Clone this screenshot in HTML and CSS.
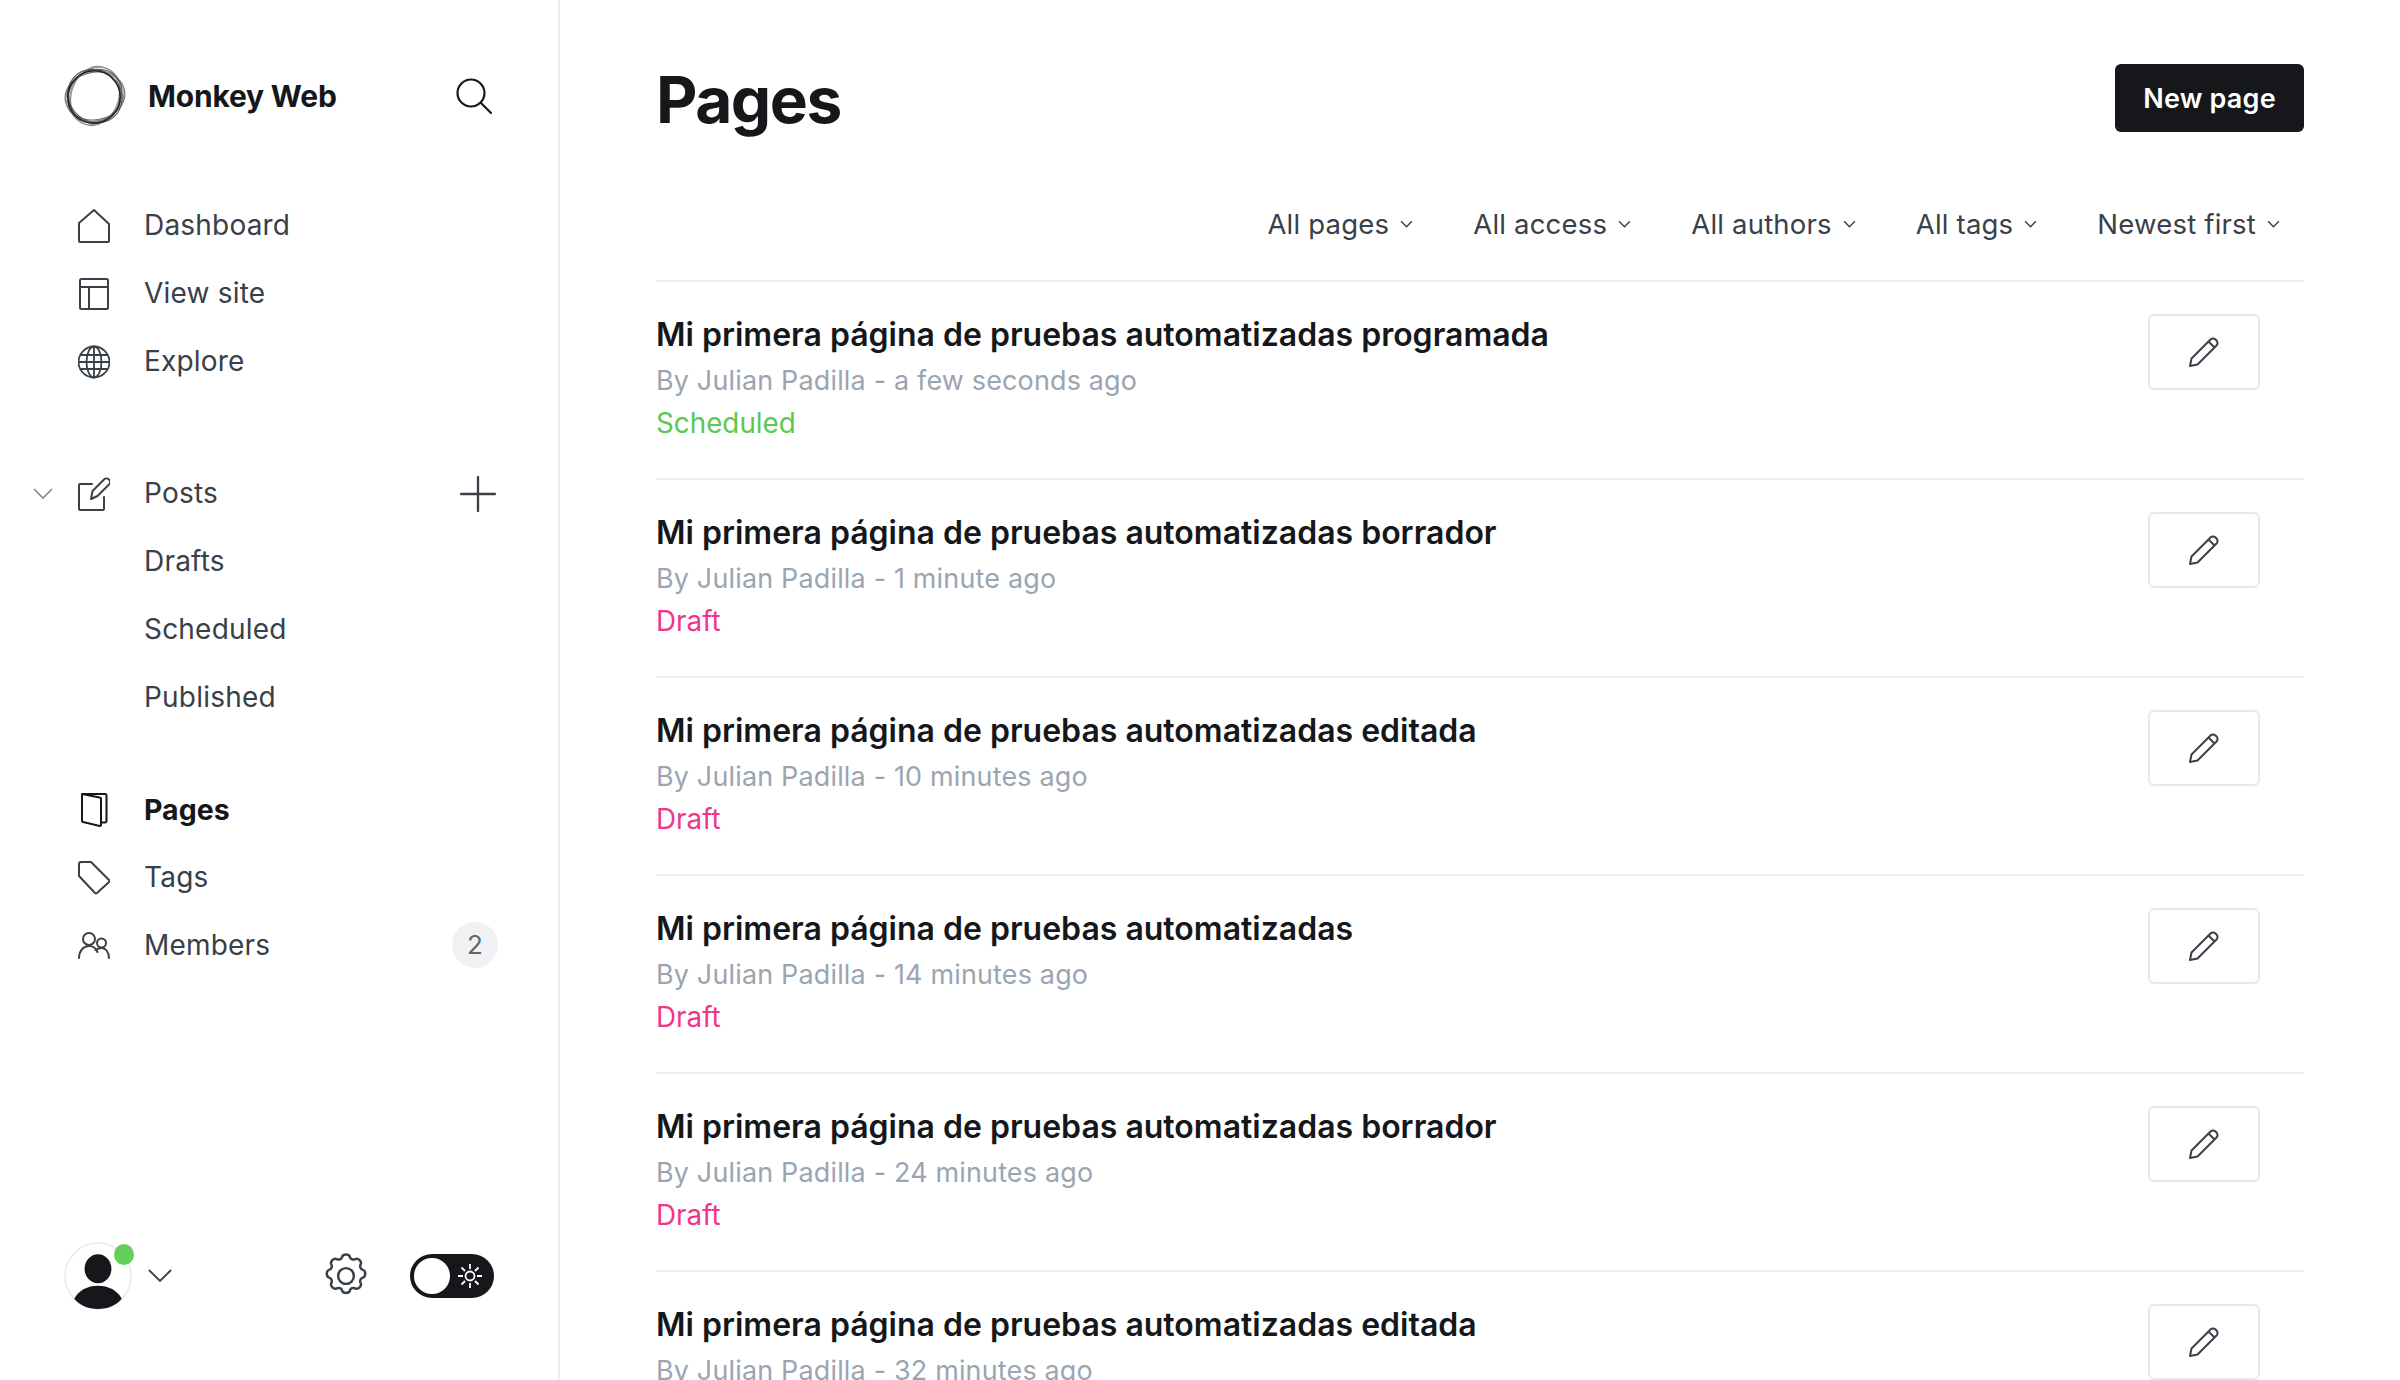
FILE: index.html
```html
<!DOCTYPE html>
<html>
<head>
  <meta charset="utf-8">
  <title>Pages - Monkey Web</title>
  <link rel="stylesheet" href="styles.css">
</head>
<body>
  <div id="app">
    <aside class="sidebar">
      <div class="brand">
        <svg class="logo" viewBox="0 0 64 64" fill="none">
          <ellipse cx="32" cy="32" rx="31" ry="24.500" transform="rotate(-72 32 32)" stroke="#888" stroke-width="1.200"/>
          <ellipse cx="32" cy="32" rx="31" ry="25" transform="rotate(-62 32 32)" stroke="#999" stroke-width="1.200"/>
          <ellipse cx="32" cy="32" rx="31" ry="24.500" transform="rotate(-10 32 32)" stroke="#777" stroke-width="1.200"/>
          <ellipse cx="32" cy="32" rx="30.500" ry="25.500" transform="rotate(-20 32 32)" stroke="#888" stroke-width="1.200"/>
          <ellipse cx="32" cy="32" rx="29.500" ry="26" transform="rotate(-42 32 32)" stroke="#555" stroke-width="1.200"/>
          <ellipse cx="32" cy="32" rx="29" ry="26.500" transform="rotate(40 32 32)" stroke="#555" stroke-width="1.200"/>
          <circle cx="31" cy="33" r="27" stroke="#222" stroke-width="1.600"/>
        </svg>
        <span class="brand-name">Monkey Web</span>
        <svg class="search" viewBox="0 0 36 36" fill="none" stroke="#15171a" stroke-width="2.200" stroke-linecap="round">
          <circle cx="15" cy="15" r="13.500"/>
          <path d="M25 25l10 10"/>
        </svg>
      </div>

      <nav class="nav nav-top">
        <a class="nav-item">
          <svg class="icon" viewBox="0 0 32 34" fill="none" stroke="#394047" stroke-width="2" stroke-linejoin="round"><path d="M1 14L16 1l15 14v17a1 1 0 0 1-1 1H2a1 1 0 0 1-1-1z"/></svg>
          Dashboard
        </a>
        <a class="nav-item">
          <svg class="icon" viewBox="0 0 32 32" fill="none" stroke="#394047" stroke-width="2" stroke-linejoin="round"><rect x="2" y="1" width="28" height="30" rx="1.500"/><path d="M2 9h28M11 9v22"/></svg>
          View site
        </a>
        <a class="nav-item">
          <svg class="icon" viewBox="0 0 32 34" fill="none" stroke="#394047" stroke-width="1.800"><circle cx="16" cy="17" r="15.500"/><ellipse cx="16" cy="17" rx="7.500" ry="15.500"/><path d="M16 1.500v31M2.500 10h27M1 17h30M2.500 24h27"/></svg>
          Explore
        </a>
      </nav>

      <nav class="nav nav-posts">
        <a class="nav-item">
          <svg class="caret" viewBox="0 0 20 12" fill="none" stroke="#7c8b9a" stroke-width="1.600"><path d="M1 1l9 9 9-9"/></svg>
          <svg class="icon" viewBox="0 0 32 34" fill="none" stroke="#394047" stroke-width="2" stroke-linejoin="round" stroke-linecap="round"><path d="M14 7H2a1 1 0 0 0-1 1v24a1 1 0 0 0 1 1h23a1 1 0 0 0 1-1V20"/><path d="M13 22l1.500-8L26 2.500a3.500 3.500 0 0 1 5 5L19.500 19z"/></svg>
          Posts
          <svg class="plus" viewBox="0 0 34 34" fill="none" stroke="#394047" stroke-width="2.200" stroke-linecap="round"><path d="M17 1v32M1 17h32"/></svg>
        </a>
        <a class="nav-item nav-sub">Drafts</a>
        <a class="nav-item nav-sub">Scheduled</a>
        <a class="nav-item nav-sub">Published</a>
      </nav>

      <nav class="nav nav-pages">
        <a class="nav-item active">
          <svg class="icon" viewBox="0 0 32 34" fill="none" stroke="#15171a" stroke-width="2" stroke-linejoin="round"><path d="M4 1h23a1.500 1.500 0 0 1 1.500 1.500V28a1.500 1.500 0 0 1-1.500 1.500h-4"/><path d="M4 1l17.500 3.500a1.500 1.500 0 0 1 1.500 1.500v26a1 1 0 0 1-1.200 1L5 29a1.500 1.500 0 0 1-1-1.500z"/></svg>
          Pages
        </a>
        <a class="nav-item">
          <svg class="icon" viewBox="0 0 32 34" fill="none" stroke="#394047" stroke-width="2" stroke-linejoin="round"><path d="M1 3a2 2 0 0 1 2-2h10l18 18a1.500 1.500 0 0 1 0 2L19 32a1.500 1.500 0 0 1-2 0L1 15z"/></svg>
          Tags
        </a>
        <a class="nav-item">
          <svg class="icon" viewBox="0 0 32 28" fill="none" stroke="#394047" stroke-width="2" stroke-linecap="round"><circle cx="11" cy="7" r="6"/><path d="M1 26c0-7 4.500-12 10-12 4 0 7 2.500 8.500 6"/><circle cx="23.500" cy="11" r="4.500"/><path d="M17.500 18c1.500-1 3.500-2 6-2 4 0 7.500 4 7.500 10"/></svg>
          Members
          <span class="badge">2</span>
        </a>
      </nav>

      <div class="side-foot">
        <div class="avatar">
          <svg viewBox="0 0 66 66"><circle cx="33" cy="33" r="32" fill="#fff" stroke="#eceef0" stroke-width="2"/><ellipse cx="33" cy="26" rx="13" ry="14" fill="#15171a"/><path d="M10 55c4-8 13-12.500 23-12.500S52 47 56 55c-5 6-13 10-23 10s-18-4-23-10z" fill="#15171a"/></svg>
          <span class="online"></span>
        </div>
        <svg class="foot-caret" viewBox="0 0 24 14" fill="none" stroke="#394047" stroke-width="1.800"><path d="M1 1l11 11L23 1"/></svg>
        <svg class="gear" viewBox="0 0 24 24" fill="none" stroke="#394047" stroke-width="1.100" stroke-linejoin="round"><circle cx="12" cy="12" r="3.500"/><path d="M10.300 2.300c.4-1.400 3-1.400 3.400 0 .3 1 1.400 1.500 2.400 1 1.300-.7 3.100 1.100 2.400 2.400-.5 1 0 2.100 1 2.400 1.400.4 1.400 3 0 3.400-1 .3-1.500 1.400-1 2.400.7 1.300-1.100 3.100-2.400 2.400-1-.5-2.100 0-2.400 1-.4 1.400-3 1.400-3.400 0-.3-1-1.400-1.500-2.400-1-1.300.7-3.100-1.100-2.400-2.400.5-1 0-2.100-1-2.400-1.400-.4-1.400-3 0-3.400 1-.3 1.500-1.400 1-2.400-.7-1.300 1.100-3.100 2.400-2.400 1 .5 2.100 0 2.400-1z" transform="translate(0 1.200)"/></svg>
        <div class="toggle">
          <span class="knob"></span>
          <svg class="sun" viewBox="0 0 24 24" fill="none" stroke="#fff" stroke-width="1.800"><circle cx="12" cy="12" r="4.500"/><path d="M12 0v5M12 19v5M0 12h5M19 12h5M3.500 3.500L7 7M17 17l3.500 3.500M3.500 20.500L7 17M17 7l3.500-3.500"/></svg>
        </div>
      </div>
    </aside>

    <main class="main">
      <header class="page-head">
        <h1>Pages</h1>
        <button class="new-btn">New page</button>
      </header>

      <div class="filters">
        <span class="filter">All pages <svg viewBox="0 0 12 8" fill="none" stroke="#394047" stroke-width="1.300"><path d="M1 1l5 5 5-5"/></svg></span>
        <span class="filter">All access <svg viewBox="0 0 12 8" fill="none" stroke="#394047" stroke-width="1.300"><path d="M1 1l5 5 5-5"/></svg></span>
        <span class="filter">All authors <svg viewBox="0 0 12 8" fill="none" stroke="#394047" stroke-width="1.300"><path d="M1 1l5 5 5-5"/></svg></span>
        <span class="filter">All tags <svg viewBox="0 0 12 8" fill="none" stroke="#394047" stroke-width="1.300"><path d="M1 1l5 5 5-5"/></svg></span>
        <span class="filter">Newest first <svg viewBox="0 0 12 8" fill="none" stroke="#394047" stroke-width="1.300"><path d="M1 1l5 5 5-5"/></svg></span>
      </div>

      <div id="page-list"></div>
    </main>
  </div>

  <script>
    // Rows of the page list
    const pages = [
      { title: 'Mi primera página de pruebas automatizadas programada', time: 'a few seconds ago', status: 'Scheduled' },
      { title: 'Mi primera página de pruebas automatizadas borrador', time: '1 minute ago', status: 'Draft' },
      { title: 'Mi primera página de pruebas automatizadas editada', time: '10 minutes ago', status: 'Draft' },
      { title: 'Mi primera página de pruebas automatizadas', time: '14 minutes ago', status: 'Draft' },
      { title: 'Mi primera página de pruebas automatizadas borrador', time: '24 minutes ago', status: 'Draft' },
      { title: 'Mi primera página de pruebas automatizadas editada', time: '32 minutes ago', status: '' }
    ];

    const list = document.getElementById('page-list');
    for (const page of pages) {
      const row = document.createElement('div');
      row.className = 'page-row';
      row.innerHTML = `
        <div class="page-info">
          <h3 class="page-title">${page.title}</h3>
          <p class="page-meta">By Julian Padilla - ${page.time}</p>
          <p class="page-status ${page.status.toLowerCase()}">${page.status}</p>
        </div>
        <button class="edit-btn">
          <svg viewBox="0 0 30 30" fill="none" stroke="#394047" stroke-width="2" stroke-linejoin="round"><path d="M1 29l1.500-7.500L21.500 2.500a3.500 3.500 0 0 1 5 0l1 1a3.500 3.500 0 0 1 0 5L8.500 27.500z"/><path d="M19.500 4.500l6 6"/></svg>
        </button>`;
      list.appendChild(row);
    }
  </script>
</body>
</html>
```

FILE: styles.css
```css
* {
  box-sizing: border-box;
}

html, body {
  margin: 0;
  padding: 0;
  height: 100%;
  overflow: hidden;
  background-color: #fff;
}

body {
  font-family: Inter, "Noto Sans", sans-serif;
  color: #15171a;
}

#app {
  display: flex;
  height: 1380px;
}

/* sidebar */
.sidebar {
  position: relative;
  flex: 0 0 560px;
  border-right: 2px solid #ebeef0;
  padding-top: 64px;
}

.brand {
  display: flex;
  align-items: center;
  height: 64px;
  padding-left: 64px;
}

.logo {
  width: 62px;
  height: 62px;
  flex: none;
}

.brand-name {
  margin-left: 22px;
  font-size: 30px;
  font-weight: 700;
  letter-spacing: -0.2px;
}

.search {
  width: 36px;
  height: 36px;
  margin-left: auto;
  margin-right: 66px;
}

.nav {
  display: flex;
  flex-direction: column;
}

.nav-top {
  margin-top: 63px;
}

.nav-posts {
  margin-top: 64px;
}

.nav-pages {
  margin-top: 44px;
}

.nav-item {
  position: relative;
  display: flex;
  align-items: center;
  height: 68px;
  padding-left: 144px;
  font-size: 28px;
  color: #394047;
  letter-spacing: 0.2px;
}

.nav-item.active {
  font-weight: 700;
  font-size: 28.5px;
  color: #15171a;
  letter-spacing: 0;
}

.icon {
  position: absolute;
  left: 78px;
  top: 18px;
  width: 32px;
  height: 34px;
}

.caret {
  position: absolute;
  left: 33px;
  top: 29px;
  width: 20px;
  height: 12px;
}

.plus {
  position: absolute;
  left: 460px;
  top: 17px;
  width: 36px;
  height: 36px;
}

.badge {
  position: absolute;
  left: 452px;
  top: 11px;
  width: 46px;
  height: 46px;
  border-radius: 50%;
  background-color: #eff1f3;
  text-align: center;
  line-height: 46px;
  font-size: 26px;
  color: #5b6672;
}

.side-foot {
  position: absolute;
  left: 64px;
  top: 1242px;
  display: flex;
  align-items: center;
  height: 68px;
}

.avatar {
  position: relative;
  width: 68px;
  height: 68px;
}

.avatar svg {
  width: 68px;
  height: 68px;
  display: block;
}

.online {
  position: absolute;
  left: 50px;
  top: 2px;
  width: 20px;
  height: 21px;
  border-radius: 50%;
  background-color: #65cf5c;
}

.foot-caret {
  width: 24px;
  height: 14px;
  margin-left: 16px;
}

.gear {
  width: 54px;
  height: 54px;
  margin-left: 147px;
}

.toggle {
  display: flex;
  align-items: center;
  width: 84px;
  height: 44px;
  margin-left: 37px;
  border-radius: 22px;
  background-color: #15171a;
}

.knob {
  width: 36px;
  height: 36px;
  margin-left: 4px;
  border-radius: 50%;
  background-color: #fff;
}

.sun {
  width: 24px;
  height: 24px;
  margin-left: 8px;
}

/* main column */
.main {
  flex: 1;
  padding: 64px 96px 0 96px;
  overflow: hidden;
}

.page-head {
  display: flex;
  align-items: center;
  justify-content: space-between;
  height: 68px;
}

.page-head h1 {
  margin: 3px 0 0;
  font-size: 64px;
  font-weight: 700;
  letter-spacing: -1.5px;
  line-height: 68px;
}

.new-btn {
  width: 189px;
  height: 68px;
  border: none;
  border-radius: 6px;
  background-color: #15171a;
  color: #fff;
  font-family: inherit;
  font-size: 27px;
  font-weight: 600;
  letter-spacing: 0.2px;
}

.filters {
  display: flex;
  justify-content: flex-end;
  align-items: center;
  gap: 60px;
  height: 150px;
  padding-top: 36px;
  padding-right: 24px;
  border-bottom: 2px solid #ebeef0;
}

.filter {
  display: flex;
  align-items: center;
  gap: 11px;
  font-size: 27.5px;
  color: #394047;
  letter-spacing: 0.2px;
}

.filter svg {
  width: 13px;
  height: 9px;
}

.page-row {
  display: flex;
  justify-content: space-between;
  height: 198px;
  border-bottom: 2px solid #ebeef0;
}

.page-info {
  padding-top: 32px;
}

.page-title {
  margin: 0;
  font-size: 32px;
  font-weight: 600;
  line-height: 42px;
}

.page-meta {
  margin: 4px 0 0;
  font-size: 26.9px;
  line-height: 40px;
  color: #9aa5b1;
  letter-spacing: 0.2px;
}

.page-status {
  margin: 3px 0 0;
  font-size: 27.8px;
  line-height: 40px;
}

.page-status.scheduled {
  color: #5bc84f;
}

.page-status.draft {
  color: #f0368a;
}

.edit-btn {
  flex: none;
  width: 112px;
  height: 76px;
  margin: 32px 44px 0 0;
  padding: 0;
  border: 2px solid #e6e8ea;
  border-radius: 6px;
  background-color: #fff;
}

.edit-btn svg {
  display: block;
  width: 30px;
  height: 30px;
  margin: 0 auto;
}
```
